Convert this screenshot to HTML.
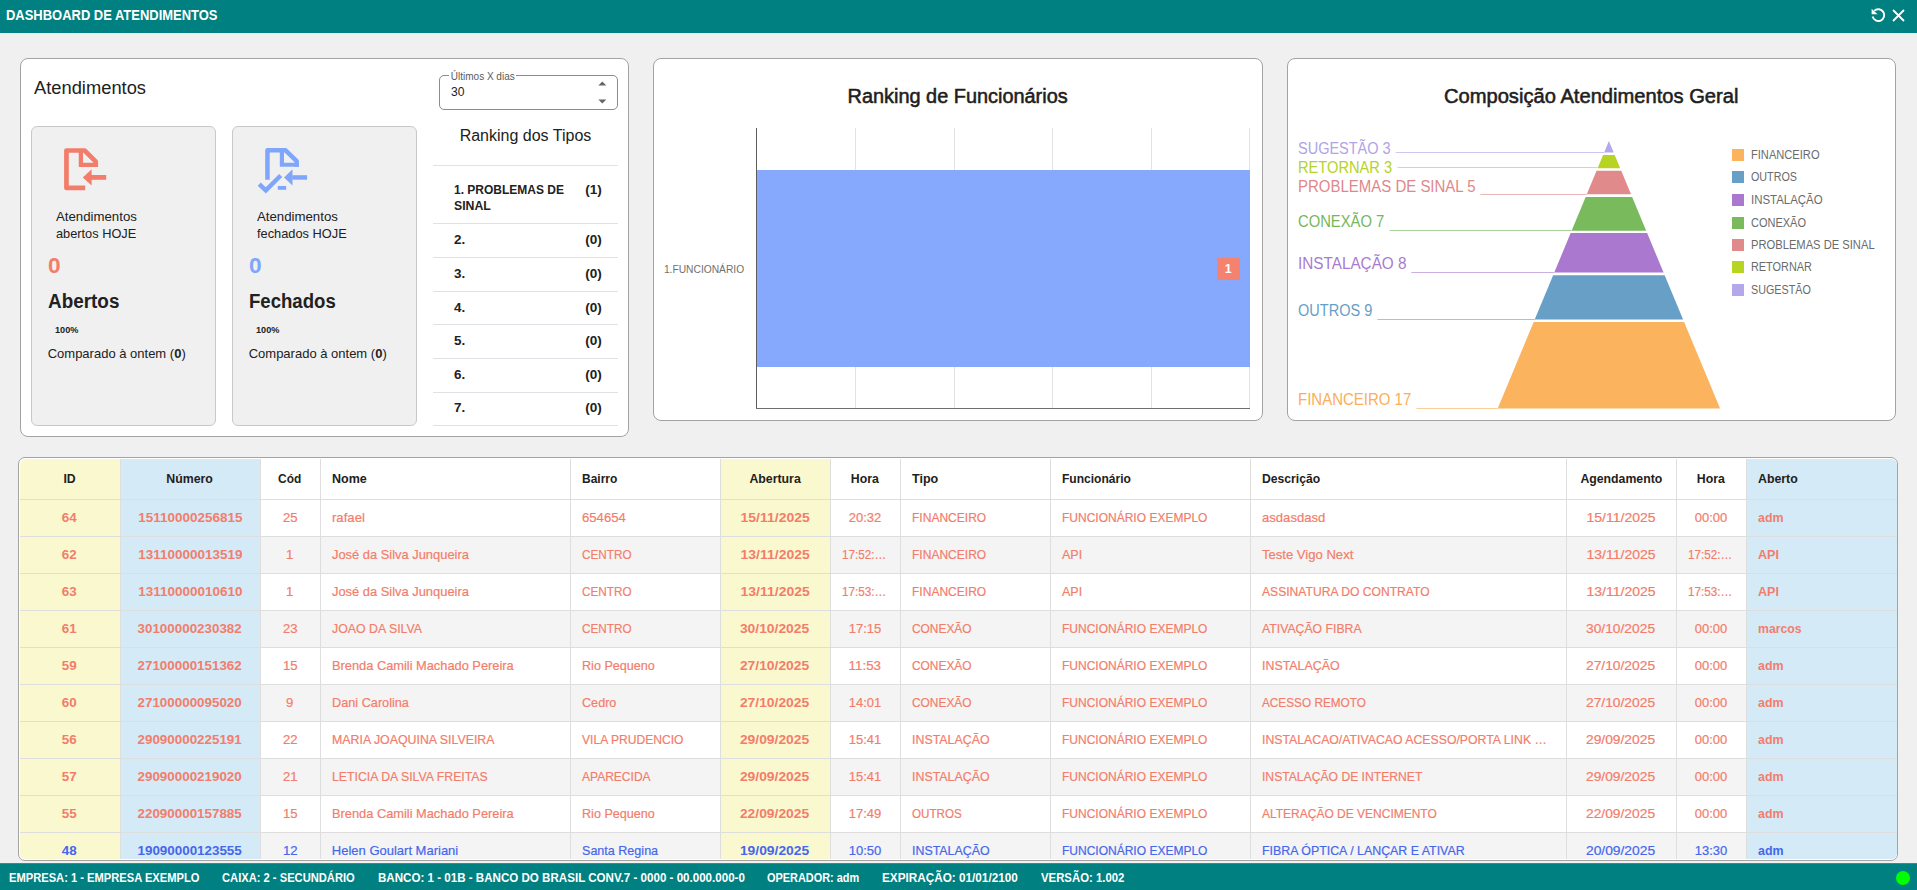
<!DOCTYPE html>
<html><head><meta charset="utf-8"><title>Dashboard de Atendimentos</title>
<style>
*{box-sizing:border-box;margin:0;padding:0}
html,body{width:1917px;height:890px;overflow:hidden;background:#f0f0f0;font-family:"Liberation Sans",sans-serif;color:#212121}
.t{position:absolute;white-space:nowrap}
.r{position:absolute}
</style></head><body>
<div class="r" style="left:0px;top:0px;width:1917px;height:33px;background:#008080"></div>
<div class="t" style="top:8.10px;font-size:14px;line-height:14px;font-weight:bold;color:#fff;transform:scaleX(0.9258);left:6.30px;transform-origin:0 0;">DASHBOARD DE ATENDIMENTOS</div>
<svg class="r" style="left:1860px;top:0px" width="57" height="33" viewBox="1860 0 57 33">
<path d="M1872.6 16.6 A5.9 5.9 0 1 0 1874.3 10.8" fill="none" stroke="#fff" stroke-width="1.9"/>
<path d="M1871.6 8.7 L1871.6 14.3 L1877.6 14.3 Z" fill="#fff"/>
<path d="M1893 10 L1904 21 M1904 10 L1893 21" stroke="#fff" stroke-width="1.8"/>
</svg>
<div class="r" style="left:20px;top:58px;width:609px;height:379px;background:#fff;border:1px solid #a3a3a3;border-radius:8px"></div>
<div class="r" style="left:653px;top:58px;width:610px;height:363px;background:#fff;border:1px solid #a3a3a3;border-radius:8px"></div>
<div class="r" style="left:1287px;top:58px;width:609px;height:363px;background:#fff;border:1px solid #a3a3a3;border-radius:8px"></div>
<div class="t" style="top:78.70px;font-size:18px;line-height:18px;font-weight:normal;color:#212121;transform:scaleX(1.0177);left:34.00px;transform-origin:0 0;">Atendimentos</div>
<div class="r" style="left:439px;top:75px;width:179px;height:35px;border:1px solid #8c8c8c;border-radius:5px"></div>
<div class="r" style="left:449px;top:70px;width:67px;height:8px;background:#fff"></div>
<div class="t" style="top:72.40px;font-size:10px;line-height:10px;font-weight:normal;color:#5a5a5a;left:450.80px;transform-origin:0 0;">Últimos X dias</div>
<div class="t" style="top:85.60px;font-size:12px;line-height:12px;font-weight:normal;color:#222;transform:scaleX(1.0117);left:450.80px;transform-origin:0 0;">30</div>
<svg class="r" style="left:595px;top:78px" width="16" height="28" viewBox="595 78 16 28">
<path d="M598.3 85.6 L602.3 81.6 L606.3 85.6 Z" fill="#666"/>
<path d="M598.3 99.5 L602.3 103.5 L606.3 99.5 Z" fill="#666"/>
</svg>
<div class="r" style="left:31px;top:126px;width:185px;height:300px;background:#f0f0f0;border:1px solid #c9c9c9;border-radius:6px"></div>
<div class="r" style="left:232px;top:126px;width:185px;height:300px;background:#f0f0f0;border:1px solid #c9c9c9;border-radius:6px"></div>
<svg class="r" style="left:55px;top:140px" width="60" height="56" viewBox="55 140 60 56">
<path d="M85.2 187.9 H66.45 V150.5 H84.6 L95.75 161.6 V167" fill="none" stroke="#f37d6b" stroke-width="4.7" stroke-linejoin="round"/>
<path d="M80.9 150.5 V164.95 H97.9" fill="none" stroke="#f37d6b" stroke-width="4.3"/>
<rect x="91" y="175" width="15.2" height="4.8" fill="#f37d6b"/>
<path d="M82.8 177.5 L91.6 169.3 L91.6 185.4 Z" fill="#f37d6b"/>
</svg>
<svg class="r" style="left:250px;top:140px" width="65" height="56" viewBox="250 140 65 56">
<path d="M267.45 179.7 V150.3 H285.6 L296.7 161.2 V166.8" fill="none" stroke="#80a6fc" stroke-width="4.5" stroke-linejoin="round"/>
<path d="M281.9 150.3 V164.75 H298.9" fill="none" stroke="#80a6fc" stroke-width="4.2"/>
<path d="M259.2 184.2 L265.8 190.3 L280.7 175.5" fill="none" stroke="#80a6fc" stroke-width="4.5"/>
<rect x="277.8" y="186" width="8.4" height="3.8" fill="#80a6fc"/>
<rect x="292.2" y="175.2" width="14.9" height="4.5" fill="#80a6fc"/>
<path d="M284 177.5 L292.5 169.2 L292.5 185.5 Z" fill="#80a6fc"/>
</svg>
<div class="t" style="top:209.65px;font-size:13px;line-height:13px;font-weight:normal;color:#212121;transform:scaleX(1.0173);left:56.20px;transform-origin:0 0;">Atendimentos</div>
<div class="t" style="top:226.65px;font-size:13px;line-height:13px;font-weight:normal;color:#212121;transform:scaleX(0.9826);left:56.20px;transform-origin:0 0;">abertos HOJE</div>
<div class="t" style="top:254.70px;font-size:22px;line-height:22px;font-weight:bold;color:#f37d6b;transform:scaleX(1.0319);left:47.70px;transform-origin:0 0;">0</div>
<div class="t" style="top:291.20px;font-size:20px;line-height:20px;font-weight:bold;color:#212121;transform:scaleX(0.9448);left:47.70px;transform-origin:0 0;">Abertos</div>
<div class="t" style="top:325.12px;font-size:9.5px;line-height:9.5px;font-weight:bold;color:#212121;transform:scaleX(0.9621);left:54.50px;transform-origin:0 0;">100%</div>
<div class="t" style="top:347.05px;font-size:13px;line-height:13px;font-weight:normal;color:#212121;left:47.70px;transform-origin:0 0;">Comparado à ontem (<b>0</b>)</div>
<div class="t" style="top:209.65px;font-size:13px;line-height:13px;font-weight:normal;color:#212121;transform:scaleX(1.0173);left:257.20px;transform-origin:0 0;">Atendimentos</div>
<div class="t" style="top:226.65px;font-size:13px;line-height:13px;font-weight:normal;color:#212121;transform:scaleX(0.9856);left:257.20px;transform-origin:0 0;">fechados HOJE</div>
<div class="t" style="top:254.70px;font-size:22px;line-height:22px;font-weight:bold;color:#80a6fc;transform:scaleX(1.0319);left:248.70px;transform-origin:0 0;">0</div>
<div class="t" style="top:291.20px;font-size:20px;line-height:20px;font-weight:bold;color:#212121;transform:scaleX(0.9290);left:248.70px;transform-origin:0 0;">Fechados</div>
<div class="t" style="top:325.12px;font-size:9.5px;line-height:9.5px;font-weight:bold;color:#212121;transform:scaleX(0.9621);left:255.50px;transform-origin:0 0;">100%</div>
<div class="t" style="top:347.05px;font-size:13px;line-height:13px;font-weight:normal;color:#212121;left:248.70px;transform-origin:0 0;">Comparado à ontem (<b>0</b>)</div>
<div class="t" style="top:127.60px;font-size:16px;line-height:16px;font-weight:normal;color:#212121;left:449.62px;width:151.75px;text-align:center;transform-origin:50% 0;">Ranking dos Tipos</div>
<div class="r" style="left:433px;top:165px;width:185px;height:1px;background:#dee2e6"></div>
<div class="r" style="left:433px;top:223px;width:185px;height:1px;background:#dee2e6"></div>
<div class="r" style="left:433px;top:257px;width:185px;height:1px;background:#dee2e6"></div>
<div class="r" style="left:433px;top:291px;width:185px;height:1px;background:#dee2e6"></div>
<div class="r" style="left:433px;top:324px;width:185px;height:1px;background:#dee2e6"></div>
<div class="r" style="left:433px;top:358px;width:185px;height:1px;background:#dee2e6"></div>
<div class="r" style="left:433px;top:392px;width:185px;height:1px;background:#dee2e6"></div>
<div class="r" style="left:433px;top:425px;width:185px;height:1px;background:#dee2e6"></div>
<div class="t" style="top:182.95px;font-size:13px;line-height:13px;font-weight:bold;color:#212121;transform:scaleX(0.9228);left:453.60px;transform-origin:0 0;">1. PROBLEMAS DE</div>
<div class="t" style="top:198.95px;font-size:13px;line-height:13px;font-weight:bold;color:#212121;transform:scaleX(0.9447);left:453.60px;transform-origin:0 0;">SINAL</div>
<div class="t" style="top:182.95px;font-size:13px;line-height:13px;font-weight:bold;color:#212121;transform:scaleX(1.0423);left:566.11px;width:35.89px;text-align:right;transform-origin:100% 0;">(1)</div>
<div class="t" style="top:232.95px;font-size:13px;line-height:13px;font-weight:bold;color:#212121;transform:scaleX(1.0346);left:453.60px;transform-origin:0 0;">2.</div>
<div class="t" style="top:232.95px;font-size:13px;line-height:13px;font-weight:bold;color:#212121;transform:scaleX(1.0423);left:566.31px;width:35.89px;text-align:right;transform-origin:100% 0;">(0)</div>
<div class="t" style="top:266.65px;font-size:13px;line-height:13px;font-weight:bold;color:#212121;transform:scaleX(1.0346);left:453.60px;transform-origin:0 0;">3.</div>
<div class="t" style="top:266.65px;font-size:13px;line-height:13px;font-weight:bold;color:#212121;transform:scaleX(1.0423);left:566.31px;width:35.89px;text-align:right;transform-origin:100% 0;">(0)</div>
<div class="t" style="top:300.85px;font-size:13px;line-height:13px;font-weight:bold;color:#212121;transform:scaleX(1.0346);left:453.60px;transform-origin:0 0;">4.</div>
<div class="t" style="top:300.85px;font-size:13px;line-height:13px;font-weight:bold;color:#212121;transform:scaleX(1.0423);left:566.31px;width:35.89px;text-align:right;transform-origin:100% 0;">(0)</div>
<div class="t" style="top:334.05px;font-size:13px;line-height:13px;font-weight:bold;color:#212121;transform:scaleX(1.0346);left:453.60px;transform-origin:0 0;">5.</div>
<div class="t" style="top:334.05px;font-size:13px;line-height:13px;font-weight:bold;color:#212121;transform:scaleX(1.0423);left:566.31px;width:35.89px;text-align:right;transform-origin:100% 0;">(0)</div>
<div class="t" style="top:367.75px;font-size:13px;line-height:13px;font-weight:bold;color:#212121;transform:scaleX(1.0346);left:453.60px;transform-origin:0 0;">6.</div>
<div class="t" style="top:367.75px;font-size:13px;line-height:13px;font-weight:bold;color:#212121;transform:scaleX(1.0423);left:566.31px;width:35.89px;text-align:right;transform-origin:100% 0;">(0)</div>
<div class="t" style="top:401.45px;font-size:13px;line-height:13px;font-weight:bold;color:#212121;transform:scaleX(1.0346);left:453.60px;transform-origin:0 0;">7.</div>
<div class="t" style="top:401.45px;font-size:13px;line-height:13px;font-weight:bold;color:#212121;transform:scaleX(1.0423);left:566.31px;width:35.89px;text-align:right;transform-origin:100% 0;">(0)</div>
<div class="t" style="top:86.40px;font-size:20px;line-height:20px;font-weight:normal;color:#1e1e1e;-webkit-text-stroke:0.55px #1e1e1e;transform:scaleX(0.9949);left:837.38px;width:241.25px;text-align:center;transform-origin:50% 0;">Ranking de Funcionários</div>
<div class="r" style="left:855px;top:128px;width:1px;height:280px;background:#e3e3e3"></div>
<div class="r" style="left:954px;top:128px;width:1px;height:280px;background:#e3e3e3"></div>
<div class="r" style="left:1052px;top:128px;width:1px;height:280px;background:#e3e3e3"></div>
<div class="r" style="left:1151px;top:128px;width:1px;height:280px;background:#e3e3e3"></div>
<div class="r" style="left:1249px;top:128px;width:1px;height:280px;background:#e3e3e3"></div>
<div class="r" style="left:757px;top:170px;width:493px;height:197px;background:#86a9fd"></div>
<div class="r" style="left:756px;top:128px;width:1px;height:281px;background:#5e5e5e"></div>
<div class="r" style="left:756px;top:408px;width:494px;height:1px;background:#6e6e6e"></div>
<div class="t" style="top:264.25px;font-size:11px;line-height:11px;font-weight:normal;color:#707070;transform:scaleX(0.9317);left:638.41px;width:106.19px;text-align:right;transform-origin:100% 0;">1.FUNCIONÁRIO</div>
<div class="r" style="left:1217px;top:258px;width:23px;height:22px;background:#f4826e"></div>
<div class="t" style="top:263.30px;font-size:12px;line-height:12px;font-weight:bold;color:#fff;transform:scaleX(1.0328);left:1215.16px;width:26.67px;text-align:center;transform-origin:50% 0;">1</div>
<div class="t" style="top:86.40px;font-size:20px;line-height:20px;font-weight:normal;color:#1e1e1e;-webkit-text-stroke:0.55px #1e1e1e;transform:scaleX(1.0074);left:1435.30px;width:312.39px;text-align:center;transform-origin:50% 0;">Composição Atendimentos Geral</div>
<div class="t" style="top:140.90px;font-size:16px;line-height:16px;font-weight:normal;color:#b0a3e6;transform:scaleX(0.9058);left:1297.90px;transform-origin:0 0;">SUGESTÃO 3</div>
<div class="t" style="top:160.00px;font-size:16px;line-height:16px;font-weight:normal;color:#b5d22a;transform:scaleX(0.9148);left:1297.90px;transform-origin:0 0;">RETORNAR 3</div>
<div class="t" style="top:178.80px;font-size:16px;line-height:16px;font-weight:normal;color:#df878a;transform:scaleX(0.9363);left:1297.90px;transform-origin:0 0;">PROBLEMAS DE SINAL 5</div>
<div class="t" style="top:213.80px;font-size:16px;line-height:16px;font-weight:normal;color:#76b65b;transform:scaleX(0.9242);left:1297.90px;transform-origin:0 0;">CONEXÃO 7</div>
<div class="t" style="top:256.10px;font-size:16px;line-height:16px;font-weight:normal;color:#a97bd0;transform:scaleX(0.9558);left:1297.90px;transform-origin:0 0;">INSTALAÇÃO 8</div>
<div class="t" style="top:303.20px;font-size:16px;line-height:16px;font-weight:normal;color:#679ec6;transform:scaleX(0.9076);left:1297.90px;transform-origin:0 0;">OUTROS 9</div>
<div class="t" style="top:392.20px;font-size:16px;line-height:16px;font-weight:normal;color:#faae5a;transform:scaleX(0.9367);left:1297.90px;transform-origin:0 0;">FINANCEIRO 17</div>
<svg class="r" style="left:1288px;top:59px" width="607" height="361" viewBox="1288 59 607 361"><path d="M1608.90 141.1 L1608.90 141.1 L1613.68 152.6 L1604.12 152.6 Z" fill="#b4a7ea"/><path d="M1603.12 155.0 L1614.68 155.0 L1620.21 168.3 L1597.59 168.3 Z" fill="#b7d423"/><path d="M1596.55 170.8 L1621.25 170.8 L1631.02 194.3 L1586.78 194.3 Z" fill="#e08a8c"/><path d="M1585.66 197.0 L1632.14 197.0 L1646.19 230.8 L1571.61 230.8 Z" fill="#79ba5c"/><path d="M1570.66 233.1 L1647.14 233.1 L1663.56 272.6 L1554.24 272.6 Z" fill="#aa79cf"/><path d="M1553.15 275.2 L1664.65 275.2 L1683.10 319.6 L1534.70 319.6 Z" fill="#679fc6"/><path d="M1533.66 322.1 L1684.14 322.1 L1720.10 408.6 L1497.70 408.6 Z" fill="#fbb35e"/><path d="M1395.7 152.5 H1604.1" stroke="#b0a3e6" stroke-width="1" opacity="0.6"/><path d="M1397.5 167.5 H1597.6" stroke="#b5d22a" stroke-width="1" opacity="0.6"/><path d="M1480.4 194.5 H1586.8" stroke="#df878a" stroke-width="1" opacity="0.6"/><path d="M1389.5 230.5 H1571.6" stroke="#76b65b" stroke-width="1" opacity="0.6"/><path d="M1411.3 272.5 H1554.2" stroke="#a97bd0" stroke-width="1" opacity="0.6"/><path d="M1377.4 319.5 H1534.7" stroke="#679ec6" stroke-width="1" opacity="0.6"/><path d="M1416.4 408.5 H1497.7" stroke="#faae5a" stroke-width="1" opacity="0.6"/></svg>
<div class="r" style="left:1732px;top:149px;width:12px;height:12px;background:#fbb35e"></div>
<div class="t" style="top:148.80px;font-size:12px;line-height:12px;font-weight:normal;color:#6b6b6b;transform:scaleX(0.9259);left:1751.40px;transform-origin:0 0;">FINANCEIRO</div>
<div class="r" style="left:1732px;top:171px;width:12px;height:12px;background:#679fc6"></div>
<div class="t" style="top:170.80px;font-size:12px;line-height:12px;font-weight:normal;color:#6b6b6b;transform:scaleX(0.8953);left:1751.40px;transform-origin:0 0;">OUTROS</div>
<div class="r" style="left:1732px;top:194px;width:12px;height:12px;background:#aa79cf"></div>
<div class="t" style="top:193.80px;font-size:12px;line-height:12px;font-weight:normal;color:#6b6b6b;transform:scaleX(0.9538);left:1751.40px;transform-origin:0 0;">INSTALAÇÃO</div>
<div class="r" style="left:1732px;top:217px;width:12px;height:12px;background:#79ba5c"></div>
<div class="t" style="top:216.80px;font-size:12px;line-height:12px;font-weight:normal;color:#6b6b6b;transform:scaleX(0.9167);left:1751.40px;transform-origin:0 0;">CONEXÃO</div>
<div class="r" style="left:1732px;top:239px;width:12px;height:12px;background:#e08a8c"></div>
<div class="t" style="top:238.80px;font-size:12px;line-height:12px;font-weight:normal;color:#6b6b6b;transform:scaleX(0.9315);left:1751.40px;transform-origin:0 0;">PROBLEMAS DE SINAL</div>
<div class="r" style="left:1732px;top:261px;width:12px;height:12px;background:#b7d423"></div>
<div class="t" style="top:260.80px;font-size:12px;line-height:12px;font-weight:normal;color:#6b6b6b;transform:scaleX(0.9069);left:1751.40px;transform-origin:0 0;">RETORNAR</div>
<div class="r" style="left:1732px;top:284px;width:12px;height:12px;background:#b4a7ea"></div>
<div class="t" style="top:283.80px;font-size:12px;line-height:12px;font-weight:normal;color:#6b6b6b;transform:scaleX(0.8962);left:1751.40px;transform-origin:0 0;">SUGESTÃO</div>
<div class="r" style="left:18px;top:457px;width:1880px;height:404px;background:#fff;border:1px solid #a3a3a3;border-radius:7px;overflow:hidden"></div>
<div class="r" style="left:20px;top:459px;width:1877px;height:400px;overflow:hidden;border-radius:6px"><div class="r" style="left:0;top:78px;width:1877px;height:36px;background:#f4f4f4"></div><div class="r" style="left:0;top:152px;width:1877px;height:36px;background:#f4f4f4"></div><div class="r" style="left:0;top:226px;width:1877px;height:36px;background:#f4f4f4"></div><div class="r" style="left:0;top:300px;width:1877px;height:36px;background:#f4f4f4"></div><div class="r" style="left:0;top:374px;width:1877px;height:36px;background:#f4f4f4"></div><div class="r" style="left:0px;top:0;width:100px;height:400px;background:#faf8cf"></div><div class="r" style="left:101px;top:0;width:139px;height:400px;background:#d4eaf7"></div><div class="r" style="left:701px;top:0;width:109px;height:400px;background:#faf8cf"></div><div class="r" style="left:1727px;top:0;width:150px;height:400px;background:#d4eaf7"></div><div class="r" style="left:0;top:40px;width:1877px;height:1px;background:#dedede"></div><div class="r" style="left:0;top:77px;width:1877px;height:1px;background:#dedede"></div><div class="r" style="left:0;top:114px;width:1877px;height:1px;background:#dedede"></div><div class="r" style="left:0;top:151px;width:1877px;height:1px;background:#dedede"></div><div class="r" style="left:0;top:188px;width:1877px;height:1px;background:#dedede"></div><div class="r" style="left:0;top:225px;width:1877px;height:1px;background:#dedede"></div><div class="r" style="left:0;top:262px;width:1877px;height:1px;background:#dedede"></div><div class="r" style="left:0;top:299px;width:1877px;height:1px;background:#dedede"></div><div class="r" style="left:0;top:336px;width:1877px;height:1px;background:#dedede"></div><div class="r" style="left:0;top:373px;width:1877px;height:1px;background:#dedede"></div><div class="r" style="left:100px;top:0;width:1px;height:400px;background:#dedede"></div><div class="r" style="left:240px;top:0;width:1px;height:400px;background:#dedede"></div><div class="r" style="left:300px;top:0;width:1px;height:400px;background:#dedede"></div><div class="r" style="left:550px;top:0;width:1px;height:400px;background:#dedede"></div><div class="r" style="left:700px;top:0;width:1px;height:400px;background:#dedede"></div><div class="r" style="left:810px;top:0;width:1px;height:400px;background:#dedede"></div><div class="r" style="left:880px;top:0;width:1px;height:400px;background:#dedede"></div><div class="r" style="left:1030px;top:0;width:1px;height:400px;background:#dedede"></div><div class="r" style="left:1230px;top:0;width:1px;height:400px;background:#dedede"></div><div class="r" style="left:1546px;top:0;width:1px;height:400px;background:#dedede"></div><div class="r" style="left:1656px;top:0;width:1px;height:400px;background:#dedede"></div><div class="r" style="left:1726px;top:0;width:1px;height:400px;background:#dedede"></div></div>
<div class="t" style="top:471.95px;font-size:13px;line-height:13px;font-weight:bold;color:#212121;transform:scaleX(0.9423);left:53.00px;width:33.00px;text-align:center;transform-origin:50% 0;">ID</div>
<div class="t" style="top:471.95px;font-size:13px;line-height:13px;font-weight:bold;color:#212121;transform:scaleX(0.9497);left:155.44px;width:69.12px;text-align:center;transform-origin:50% 0;">Número</div>
<div class="t" style="top:471.95px;font-size:13px;line-height:13px;font-weight:bold;color:#212121;transform:scaleX(0.9165);left:267.37px;width:45.27px;text-align:center;transform-origin:50% 0;">Cód</div>
<div class="t" style="top:471.95px;font-size:13px;line-height:13px;font-weight:bold;color:#212121;transform:scaleX(0.9632);left:331.80px;transform-origin:0 0;">Nome</div>
<div class="t" style="top:471.95px;font-size:13px;line-height:13px;font-weight:bold;color:#212121;transform:scaleX(0.9237);left:581.80px;transform-origin:0 0;">Bairro</div>
<div class="t" style="top:471.95px;font-size:13px;line-height:13px;font-weight:bold;color:#212121;transform:scaleX(0.9475);left:737.91px;width:74.19px;text-align:center;transform-origin:50% 0;">Abertura</div>
<div class="t" style="top:471.95px;font-size:13px;line-height:13px;font-weight:bold;color:#212121;transform:scaleX(0.9462);left:840.19px;width:49.62px;text-align:center;transform-origin:50% 0;">Hora</div>
<div class="t" style="top:471.95px;font-size:13px;line-height:13px;font-weight:bold;color:#212121;transform:scaleX(0.9621);left:911.80px;transform-origin:0 0;">Tipo</div>
<div class="t" style="top:471.95px;font-size:13px;line-height:13px;font-weight:bold;color:#212121;transform:scaleX(0.9263);left:1061.80px;transform-origin:0 0;">Funcionário</div>
<div class="t" style="top:471.95px;font-size:13px;line-height:13px;font-weight:bold;color:#212121;transform:scaleX(0.9357);left:1261.80px;transform-origin:0 0;">Descrição</div>
<div class="t" style="top:471.95px;font-size:13px;line-height:13px;font-weight:bold;color:#212121;transform:scaleX(0.9445);left:1567.66px;width:106.67px;text-align:center;transform-origin:50% 0;">Agendamento</div>
<div class="t" style="top:471.95px;font-size:13px;line-height:13px;font-weight:bold;color:#212121;transform:scaleX(0.9462);left:1686.19px;width:49.62px;text-align:center;transform-origin:50% 0;">Hora</div>
<div class="t" style="top:471.95px;font-size:13px;line-height:13px;font-weight:bold;color:#212121;transform:scaleX(0.9482);left:1757.80px;transform-origin:0 0;">Aberto</div>
<div class="t" style="top:510.95px;font-size:13px;line-height:13px;font-weight:bold;color:#f37d6b;transform:scaleX(1.0302);left:52.27px;width:34.47px;text-align:center;transform-origin:50% 0;">64</div>
<div class="t" style="top:510.95px;font-size:13px;line-height:13px;font-weight:bold;color:#f37d6b;transform:scaleX(1.0376);left:129.72px;width:120.56px;text-align:center;transform-origin:50% 0;">15110000256815</div>
<div class="t" style="top:510.95px;font-size:13px;line-height:13px;font-weight:normal;color:#f37d6b;transform:scaleX(1.0108);left:272.77px;width:34.47px;text-align:center;transform-origin:50% 0;-webkit-text-stroke:0.2px currentColor;">25</div>
<div class="t" style="top:510.95px;font-size:13px;line-height:13px;font-weight:normal;color:#f37d6b;transform:scaleX(1.0106);left:331.80px;transform-origin:0 0;-webkit-text-stroke:0.2px currentColor;">rafael</div>
<div class="t" style="top:510.95px;font-size:13px;line-height:13px;font-weight:normal;color:#f37d6b;transform:scaleX(1.0108);left:581.80px;transform-origin:0 0;-webkit-text-stroke:0.2px currentColor;">654654</div>
<div class="t" style="top:510.95px;font-size:13px;line-height:13px;font-weight:bold;color:#f37d6b;transform:scaleX(1.0762);left:732.81px;width:84.38px;text-align:center;transform-origin:50% 0;">15/11/2025</div>
<div class="t" style="top:510.95px;font-size:13px;line-height:13px;font-weight:normal;color:#f37d6b;left:838.73px;width:52.55px;text-align:center;transform-origin:50% 0;-webkit-text-stroke:0.2px currentColor;">20:32</div>
<div class="t" style="top:510.95px;font-size:13px;line-height:13px;font-weight:normal;color:#f37d6b;transform:scaleX(0.9257);left:911.80px;transform-origin:0 0;-webkit-text-stroke:0.2px currentColor;">FINANCEIRO</div>
<div class="t" style="top:510.95px;font-size:13px;line-height:13px;font-weight:normal;color:#f37d6b;transform:scaleX(0.9236);left:1061.80px;transform-origin:0 0;-webkit-text-stroke:0.2px currentColor;">FUNCIONÁRIO EXEMPLO</div>
<div class="t" style="top:510.95px;font-size:13px;line-height:13px;font-weight:normal;color:#f37d6b;transform:scaleX(1.0067);left:1261.80px;transform-origin:0 0;-webkit-text-stroke:0.2px currentColor;">asdasdasd</div>
<div class="t" style="top:510.95px;font-size:13px;line-height:13px;font-weight:normal;color:#f37d6b;transform:scaleX(1.0794);left:1578.94px;width:84.12px;text-align:center;transform-origin:50% 0;-webkit-text-stroke:0.2px currentColor;">15/11/2025</div>
<div class="t" style="top:510.95px;font-size:13px;line-height:13px;font-weight:normal;color:#f37d6b;left:1684.73px;width:52.55px;text-align:center;transform-origin:50% 0;-webkit-text-stroke:0.2px currentColor;">00:00</div>
<div class="t" style="top:510.95px;font-size:13px;line-height:13px;font-weight:bold;color:#f37d6b;transform:scaleX(0.9550);left:1757.80px;transform-origin:0 0;">adm</div>
<div class="t" style="top:547.95px;font-size:13px;line-height:13px;font-weight:bold;color:#f37d6b;transform:scaleX(1.0302);left:52.27px;width:34.47px;text-align:center;transform-origin:50% 0;">62</div>
<div class="t" style="top:547.95px;font-size:13px;line-height:13px;font-weight:bold;color:#f37d6b;transform:scaleX(1.0376);left:129.72px;width:120.56px;text-align:center;transform-origin:50% 0;">13110000013519</div>
<div class="t" style="top:547.95px;font-size:13px;line-height:13px;font-weight:normal;color:#f37d6b;transform:scaleX(1.0108);left:276.38px;width:27.23px;text-align:center;transform-origin:50% 0;-webkit-text-stroke:0.2px currentColor;">1</div>
<div class="t" style="top:547.95px;font-size:13px;line-height:13px;font-weight:normal;color:#f37d6b;transform:scaleX(0.9916);left:331.80px;transform-origin:0 0;-webkit-text-stroke:0.2px currentColor;">José da Silva Junqueira</div>
<div class="t" style="top:547.95px;font-size:13px;line-height:13px;font-weight:normal;color:#f37d6b;transform:scaleX(0.9046);left:581.80px;transform-origin:0 0;-webkit-text-stroke:0.2px currentColor;">CENTRO</div>
<div class="t" style="top:547.95px;font-size:13px;line-height:13px;font-weight:bold;color:#f37d6b;transform:scaleX(1.0762);left:732.81px;width:84.38px;text-align:center;transform-origin:50% 0;">13/11/2025</div>
<div class="t" style="top:547.95px;font-size:13px;line-height:13px;font-weight:normal;color:#f37d6b;transform:scaleX(0.9005);left:841.80px;transform-origin:0 0;-webkit-text-stroke:0.2px currentColor;">17:52:…</div>
<div class="t" style="top:547.95px;font-size:13px;line-height:13px;font-weight:normal;color:#f37d6b;transform:scaleX(0.9257);left:911.80px;transform-origin:0 0;-webkit-text-stroke:0.2px currentColor;">FINANCEIRO</div>
<div class="t" style="top:547.95px;font-size:13px;line-height:13px;font-weight:normal;color:#f37d6b;transform:scaleX(0.9650);left:1061.80px;transform-origin:0 0;-webkit-text-stroke:0.2px currentColor;">API</div>
<div class="t" style="top:547.95px;font-size:13px;line-height:13px;font-weight:normal;color:#f37d6b;transform:scaleX(1.0055);left:1261.80px;transform-origin:0 0;-webkit-text-stroke:0.2px currentColor;">Teste Vigo Next</div>
<div class="t" style="top:547.95px;font-size:13px;line-height:13px;font-weight:normal;color:#f37d6b;transform:scaleX(1.0794);left:1578.94px;width:84.12px;text-align:center;transform-origin:50% 0;-webkit-text-stroke:0.2px currentColor;">13/11/2025</div>
<div class="t" style="top:547.95px;font-size:13px;line-height:13px;font-weight:normal;color:#f37d6b;transform:scaleX(0.9005);left:1687.80px;transform-origin:0 0;-webkit-text-stroke:0.2px currentColor;">17:52:…</div>
<div class="t" style="top:547.95px;font-size:13px;line-height:13px;font-weight:bold;color:#f37d6b;transform:scaleX(0.9647);left:1757.80px;transform-origin:0 0;">API</div>
<div class="t" style="top:584.95px;font-size:13px;line-height:13px;font-weight:bold;color:#f37d6b;transform:scaleX(1.0302);left:52.27px;width:34.47px;text-align:center;transform-origin:50% 0;">63</div>
<div class="t" style="top:584.95px;font-size:13px;line-height:13px;font-weight:bold;color:#f37d6b;transform:scaleX(1.0376);left:129.72px;width:120.56px;text-align:center;transform-origin:50% 0;">13110000010610</div>
<div class="t" style="top:584.95px;font-size:13px;line-height:13px;font-weight:normal;color:#f37d6b;transform:scaleX(1.0108);left:276.38px;width:27.23px;text-align:center;transform-origin:50% 0;-webkit-text-stroke:0.2px currentColor;">1</div>
<div class="t" style="top:584.95px;font-size:13px;line-height:13px;font-weight:normal;color:#f37d6b;transform:scaleX(0.9916);left:331.80px;transform-origin:0 0;-webkit-text-stroke:0.2px currentColor;">José da Silva Junqueira</div>
<div class="t" style="top:584.95px;font-size:13px;line-height:13px;font-weight:normal;color:#f37d6b;transform:scaleX(0.9046);left:581.80px;transform-origin:0 0;-webkit-text-stroke:0.2px currentColor;">CENTRO</div>
<div class="t" style="top:584.95px;font-size:13px;line-height:13px;font-weight:bold;color:#f37d6b;transform:scaleX(1.0762);left:732.81px;width:84.38px;text-align:center;transform-origin:50% 0;">13/11/2025</div>
<div class="t" style="top:584.95px;font-size:13px;line-height:13px;font-weight:normal;color:#f37d6b;transform:scaleX(0.9005);left:841.80px;transform-origin:0 0;-webkit-text-stroke:0.2px currentColor;">17:53:…</div>
<div class="t" style="top:584.95px;font-size:13px;line-height:13px;font-weight:normal;color:#f37d6b;transform:scaleX(0.9257);left:911.80px;transform-origin:0 0;-webkit-text-stroke:0.2px currentColor;">FINANCEIRO</div>
<div class="t" style="top:584.95px;font-size:13px;line-height:13px;font-weight:normal;color:#f37d6b;transform:scaleX(0.9650);left:1061.80px;transform-origin:0 0;-webkit-text-stroke:0.2px currentColor;">API</div>
<div class="t" style="top:584.95px;font-size:13px;line-height:13px;font-weight:normal;color:#f37d6b;transform:scaleX(0.9317);left:1261.80px;transform-origin:0 0;-webkit-text-stroke:0.2px currentColor;">ASSINATURA DO CONTRATO</div>
<div class="t" style="top:584.95px;font-size:13px;line-height:13px;font-weight:normal;color:#f37d6b;transform:scaleX(1.0794);left:1578.94px;width:84.12px;text-align:center;transform-origin:50% 0;-webkit-text-stroke:0.2px currentColor;">13/11/2025</div>
<div class="t" style="top:584.95px;font-size:13px;line-height:13px;font-weight:normal;color:#f37d6b;transform:scaleX(0.9005);left:1687.80px;transform-origin:0 0;-webkit-text-stroke:0.2px currentColor;">17:53:…</div>
<div class="t" style="top:584.95px;font-size:13px;line-height:13px;font-weight:bold;color:#f37d6b;transform:scaleX(0.9647);left:1757.80px;transform-origin:0 0;">API</div>
<div class="t" style="top:621.95px;font-size:13px;line-height:13px;font-weight:bold;color:#f37d6b;transform:scaleX(1.0302);left:52.27px;width:34.47px;text-align:center;transform-origin:50% 0;">61</div>
<div class="t" style="top:621.95px;font-size:13px;line-height:13px;font-weight:bold;color:#f37d6b;transform:scaleX(1.0302);left:129.36px;width:121.28px;text-align:center;transform-origin:50% 0;">30100000230382</div>
<div class="t" style="top:621.95px;font-size:13px;line-height:13px;font-weight:normal;color:#f37d6b;transform:scaleX(1.0108);left:272.77px;width:34.47px;text-align:center;transform-origin:50% 0;-webkit-text-stroke:0.2px currentColor;">23</div>
<div class="t" style="top:621.95px;font-size:13px;line-height:13px;font-weight:normal;color:#f37d6b;transform:scaleX(0.9494);left:331.80px;transform-origin:0 0;-webkit-text-stroke:0.2px currentColor;">JOAO DA SILVA</div>
<div class="t" style="top:621.95px;font-size:13px;line-height:13px;font-weight:normal;color:#f37d6b;transform:scaleX(0.9046);left:581.80px;transform-origin:0 0;-webkit-text-stroke:0.2px currentColor;">CENTRO</div>
<div class="t" style="top:621.95px;font-size:13px;line-height:13px;font-weight:bold;color:#f37d6b;transform:scaleX(1.0643);left:732.45px;width:85.09px;text-align:center;transform-origin:50% 0;">30/10/2025</div>
<div class="t" style="top:621.95px;font-size:13px;line-height:13px;font-weight:normal;color:#f37d6b;left:838.73px;width:52.55px;text-align:center;transform-origin:50% 0;-webkit-text-stroke:0.2px currentColor;">17:15</div>
<div class="t" style="top:621.95px;font-size:13px;line-height:13px;font-weight:normal;color:#f37d6b;transform:scaleX(0.9166);left:911.80px;transform-origin:0 0;-webkit-text-stroke:0.2px currentColor;">CONEXÃO</div>
<div class="t" style="top:621.95px;font-size:13px;line-height:13px;font-weight:normal;color:#f37d6b;transform:scaleX(0.9236);left:1061.80px;transform-origin:0 0;-webkit-text-stroke:0.2px currentColor;">FUNCIONÁRIO EXEMPLO</div>
<div class="t" style="top:621.95px;font-size:13px;line-height:13px;font-weight:normal;color:#f37d6b;transform:scaleX(0.9419);left:1261.80px;transform-origin:0 0;-webkit-text-stroke:0.2px currentColor;">ATIVAÇÃO FIBRA</div>
<div class="t" style="top:621.95px;font-size:13px;line-height:13px;font-weight:normal;color:#f37d6b;transform:scaleX(1.0634);left:1578.45px;width:85.09px;text-align:center;transform-origin:50% 0;-webkit-text-stroke:0.2px currentColor;">30/10/2025</div>
<div class="t" style="top:621.95px;font-size:13px;line-height:13px;font-weight:normal;color:#f37d6b;left:1684.73px;width:52.55px;text-align:center;transform-origin:50% 0;-webkit-text-stroke:0.2px currentColor;">00:00</div>
<div class="t" style="top:621.95px;font-size:13px;line-height:13px;font-weight:bold;color:#f37d6b;transform:scaleX(0.9433);left:1757.80px;transform-origin:0 0;">marcos</div>
<div class="t" style="top:658.95px;font-size:13px;line-height:13px;font-weight:bold;color:#f37d6b;transform:scaleX(1.0302);left:52.27px;width:34.47px;text-align:center;transform-origin:50% 0;">59</div>
<div class="t" style="top:658.95px;font-size:13px;line-height:13px;font-weight:bold;color:#f37d6b;transform:scaleX(1.0302);left:129.36px;width:121.28px;text-align:center;transform-origin:50% 0;">27100000151362</div>
<div class="t" style="top:658.95px;font-size:13px;line-height:13px;font-weight:normal;color:#f37d6b;transform:scaleX(1.0108);left:272.77px;width:34.47px;text-align:center;transform-origin:50% 0;-webkit-text-stroke:0.2px currentColor;">15</div>
<div class="t" style="top:658.95px;font-size:13px;line-height:13px;font-weight:normal;color:#f37d6b;transform:scaleX(0.9859);left:331.80px;transform-origin:0 0;-webkit-text-stroke:0.2px currentColor;">Brenda Camili Machado Pereira</div>
<div class="t" style="top:658.95px;font-size:13px;line-height:13px;font-weight:normal;color:#f37d6b;transform:scaleX(0.9690);left:581.80px;transform-origin:0 0;-webkit-text-stroke:0.2px currentColor;">Rio Pequeno</div>
<div class="t" style="top:658.95px;font-size:13px;line-height:13px;font-weight:bold;color:#f37d6b;transform:scaleX(1.0643);left:732.45px;width:85.09px;text-align:center;transform-origin:50% 0;">27/10/2025</div>
<div class="t" style="top:658.95px;font-size:13px;line-height:13px;font-weight:normal;color:#f37d6b;transform:scaleX(1.0262);left:839.21px;width:51.58px;text-align:center;transform-origin:50% 0;-webkit-text-stroke:0.2px currentColor;">11:53</div>
<div class="t" style="top:658.95px;font-size:13px;line-height:13px;font-weight:normal;color:#f37d6b;transform:scaleX(0.9166);left:911.80px;transform-origin:0 0;-webkit-text-stroke:0.2px currentColor;">CONEXÃO</div>
<div class="t" style="top:658.95px;font-size:13px;line-height:13px;font-weight:normal;color:#f37d6b;transform:scaleX(0.9236);left:1061.80px;transform-origin:0 0;-webkit-text-stroke:0.2px currentColor;">FUNCIONÁRIO EXEMPLO</div>
<div class="t" style="top:658.95px;font-size:13px;line-height:13px;font-weight:normal;color:#f37d6b;transform:scaleX(0.9539);left:1261.80px;transform-origin:0 0;-webkit-text-stroke:0.2px currentColor;">INSTALAÇÃO</div>
<div class="t" style="top:658.95px;font-size:13px;line-height:13px;font-weight:normal;color:#f37d6b;transform:scaleX(1.0634);left:1578.45px;width:85.09px;text-align:center;transform-origin:50% 0;-webkit-text-stroke:0.2px currentColor;">27/10/2025</div>
<div class="t" style="top:658.95px;font-size:13px;line-height:13px;font-weight:normal;color:#f37d6b;left:1684.73px;width:52.55px;text-align:center;transform-origin:50% 0;-webkit-text-stroke:0.2px currentColor;">00:00</div>
<div class="t" style="top:658.95px;font-size:13px;line-height:13px;font-weight:bold;color:#f37d6b;transform:scaleX(0.9550);left:1757.80px;transform-origin:0 0;">adm</div>
<div class="t" style="top:695.95px;font-size:13px;line-height:13px;font-weight:bold;color:#f37d6b;transform:scaleX(1.0302);left:52.27px;width:34.47px;text-align:center;transform-origin:50% 0;">60</div>
<div class="t" style="top:695.95px;font-size:13px;line-height:13px;font-weight:bold;color:#f37d6b;transform:scaleX(1.0302);left:129.36px;width:121.28px;text-align:center;transform-origin:50% 0;">27100000095020</div>
<div class="t" style="top:695.95px;font-size:13px;line-height:13px;font-weight:normal;color:#f37d6b;transform:scaleX(1.0108);left:276.38px;width:27.23px;text-align:center;transform-origin:50% 0;-webkit-text-stroke:0.2px currentColor;">9</div>
<div class="t" style="top:695.95px;font-size:13px;line-height:13px;font-weight:normal;color:#f37d6b;transform:scaleX(0.9768);left:331.80px;transform-origin:0 0;-webkit-text-stroke:0.2px currentColor;">Dani Carolina</div>
<div class="t" style="top:695.95px;font-size:13px;line-height:13px;font-weight:normal;color:#f37d6b;transform:scaleX(0.9709);left:581.80px;transform-origin:0 0;-webkit-text-stroke:0.2px currentColor;">Cedro</div>
<div class="t" style="top:695.95px;font-size:13px;line-height:13px;font-weight:bold;color:#f37d6b;transform:scaleX(1.0643);left:732.45px;width:85.09px;text-align:center;transform-origin:50% 0;">27/10/2025</div>
<div class="t" style="top:695.95px;font-size:13px;line-height:13px;font-weight:normal;color:#f37d6b;left:838.73px;width:52.55px;text-align:center;transform-origin:50% 0;-webkit-text-stroke:0.2px currentColor;">14:01</div>
<div class="t" style="top:695.95px;font-size:13px;line-height:13px;font-weight:normal;color:#f37d6b;transform:scaleX(0.9166);left:911.80px;transform-origin:0 0;-webkit-text-stroke:0.2px currentColor;">CONEXÃO</div>
<div class="t" style="top:695.95px;font-size:13px;line-height:13px;font-weight:normal;color:#f37d6b;transform:scaleX(0.9236);left:1061.80px;transform-origin:0 0;-webkit-text-stroke:0.2px currentColor;">FUNCIONÁRIO EXEMPLO</div>
<div class="t" style="top:695.95px;font-size:13px;line-height:13px;font-weight:normal;color:#f37d6b;transform:scaleX(0.9066);left:1261.80px;transform-origin:0 0;-webkit-text-stroke:0.2px currentColor;">ACESSO REMOTO</div>
<div class="t" style="top:695.95px;font-size:13px;line-height:13px;font-weight:normal;color:#f37d6b;transform:scaleX(1.0634);left:1578.45px;width:85.09px;text-align:center;transform-origin:50% 0;-webkit-text-stroke:0.2px currentColor;">27/10/2025</div>
<div class="t" style="top:695.95px;font-size:13px;line-height:13px;font-weight:normal;color:#f37d6b;left:1684.73px;width:52.55px;text-align:center;transform-origin:50% 0;-webkit-text-stroke:0.2px currentColor;">00:00</div>
<div class="t" style="top:695.95px;font-size:13px;line-height:13px;font-weight:bold;color:#f37d6b;transform:scaleX(0.9550);left:1757.80px;transform-origin:0 0;">adm</div>
<div class="t" style="top:732.95px;font-size:13px;line-height:13px;font-weight:bold;color:#f37d6b;transform:scaleX(1.0302);left:52.27px;width:34.47px;text-align:center;transform-origin:50% 0;">56</div>
<div class="t" style="top:732.95px;font-size:13px;line-height:13px;font-weight:bold;color:#f37d6b;transform:scaleX(1.0302);left:129.36px;width:121.28px;text-align:center;transform-origin:50% 0;">29090000225191</div>
<div class="t" style="top:732.95px;font-size:13px;line-height:13px;font-weight:normal;color:#f37d6b;transform:scaleX(1.0108);left:272.77px;width:34.47px;text-align:center;transform-origin:50% 0;-webkit-text-stroke:0.2px currentColor;">22</div>
<div class="t" style="top:732.95px;font-size:13px;line-height:13px;font-weight:normal;color:#f37d6b;transform:scaleX(0.9506);left:331.80px;transform-origin:0 0;-webkit-text-stroke:0.2px currentColor;">MARIA JOAQUINA SILVEIRA</div>
<div class="t" style="top:732.95px;font-size:13px;line-height:13px;font-weight:normal;color:#f37d6b;transform:scaleX(0.9298);left:581.80px;transform-origin:0 0;-webkit-text-stroke:0.2px currentColor;">VILA PRUDENCIO</div>
<div class="t" style="top:732.95px;font-size:13px;line-height:13px;font-weight:bold;color:#f37d6b;transform:scaleX(1.0643);left:732.45px;width:85.09px;text-align:center;transform-origin:50% 0;">29/09/2025</div>
<div class="t" style="top:732.95px;font-size:13px;line-height:13px;font-weight:normal;color:#f37d6b;left:838.73px;width:52.55px;text-align:center;transform-origin:50% 0;-webkit-text-stroke:0.2px currentColor;">15:41</div>
<div class="t" style="top:732.95px;font-size:13px;line-height:13px;font-weight:normal;color:#f37d6b;transform:scaleX(0.9539);left:911.80px;transform-origin:0 0;-webkit-text-stroke:0.2px currentColor;">INSTALAÇÃO</div>
<div class="t" style="top:732.95px;font-size:13px;line-height:13px;font-weight:normal;color:#f37d6b;transform:scaleX(0.9236);left:1061.80px;transform-origin:0 0;-webkit-text-stroke:0.2px currentColor;">FUNCIONÁRIO EXEMPLO</div>
<div class="t" style="top:732.95px;font-size:13px;line-height:13px;font-weight:normal;color:#f37d6b;transform:scaleX(0.9445);left:1261.80px;transform-origin:0 0;-webkit-text-stroke:0.2px currentColor;">INSTALACAO/ATIVACAO ACESSO/PORTA LINK …</div>
<div class="t" style="top:732.95px;font-size:13px;line-height:13px;font-weight:normal;color:#f37d6b;transform:scaleX(1.0634);left:1578.45px;width:85.09px;text-align:center;transform-origin:50% 0;-webkit-text-stroke:0.2px currentColor;">29/09/2025</div>
<div class="t" style="top:732.95px;font-size:13px;line-height:13px;font-weight:normal;color:#f37d6b;left:1684.73px;width:52.55px;text-align:center;transform-origin:50% 0;-webkit-text-stroke:0.2px currentColor;">00:00</div>
<div class="t" style="top:732.95px;font-size:13px;line-height:13px;font-weight:bold;color:#f37d6b;transform:scaleX(0.9550);left:1757.80px;transform-origin:0 0;">adm</div>
<div class="t" style="top:769.95px;font-size:13px;line-height:13px;font-weight:bold;color:#f37d6b;transform:scaleX(1.0302);left:52.27px;width:34.47px;text-align:center;transform-origin:50% 0;">57</div>
<div class="t" style="top:769.95px;font-size:13px;line-height:13px;font-weight:bold;color:#f37d6b;transform:scaleX(1.0302);left:129.36px;width:121.28px;text-align:center;transform-origin:50% 0;">29090000219020</div>
<div class="t" style="top:769.95px;font-size:13px;line-height:13px;font-weight:normal;color:#f37d6b;transform:scaleX(1.0108);left:272.77px;width:34.47px;text-align:center;transform-origin:50% 0;-webkit-text-stroke:0.2px currentColor;">21</div>
<div class="t" style="top:769.95px;font-size:13px;line-height:13px;font-weight:normal;color:#f37d6b;transform:scaleX(0.9456);left:331.80px;transform-origin:0 0;-webkit-text-stroke:0.2px currentColor;">LETICIA DA SILVA FREITAS</div>
<div class="t" style="top:769.95px;font-size:13px;line-height:13px;font-weight:normal;color:#f37d6b;transform:scaleX(0.9246);left:581.80px;transform-origin:0 0;-webkit-text-stroke:0.2px currentColor;">APARECIDA</div>
<div class="t" style="top:769.95px;font-size:13px;line-height:13px;font-weight:bold;color:#f37d6b;transform:scaleX(1.0643);left:732.45px;width:85.09px;text-align:center;transform-origin:50% 0;">29/09/2025</div>
<div class="t" style="top:769.95px;font-size:13px;line-height:13px;font-weight:normal;color:#f37d6b;left:838.73px;width:52.55px;text-align:center;transform-origin:50% 0;-webkit-text-stroke:0.2px currentColor;">15:41</div>
<div class="t" style="top:769.95px;font-size:13px;line-height:13px;font-weight:normal;color:#f37d6b;transform:scaleX(0.9539);left:911.80px;transform-origin:0 0;-webkit-text-stroke:0.2px currentColor;">INSTALAÇÃO</div>
<div class="t" style="top:769.95px;font-size:13px;line-height:13px;font-weight:normal;color:#f37d6b;transform:scaleX(0.9236);left:1061.80px;transform-origin:0 0;-webkit-text-stroke:0.2px currentColor;">FUNCIONÁRIO EXEMPLO</div>
<div class="t" style="top:769.95px;font-size:13px;line-height:13px;font-weight:normal;color:#f37d6b;transform:scaleX(0.9339);left:1261.80px;transform-origin:0 0;-webkit-text-stroke:0.2px currentColor;">INSTALAÇÃO DE INTERNET</div>
<div class="t" style="top:769.95px;font-size:13px;line-height:13px;font-weight:normal;color:#f37d6b;transform:scaleX(1.0634);left:1578.45px;width:85.09px;text-align:center;transform-origin:50% 0;-webkit-text-stroke:0.2px currentColor;">29/09/2025</div>
<div class="t" style="top:769.95px;font-size:13px;line-height:13px;font-weight:normal;color:#f37d6b;left:1684.73px;width:52.55px;text-align:center;transform-origin:50% 0;-webkit-text-stroke:0.2px currentColor;">00:00</div>
<div class="t" style="top:769.95px;font-size:13px;line-height:13px;font-weight:bold;color:#f37d6b;transform:scaleX(0.9550);left:1757.80px;transform-origin:0 0;">adm</div>
<div class="t" style="top:806.95px;font-size:13px;line-height:13px;font-weight:bold;color:#f37d6b;transform:scaleX(1.0302);left:52.27px;width:34.47px;text-align:center;transform-origin:50% 0;">55</div>
<div class="t" style="top:806.95px;font-size:13px;line-height:13px;font-weight:bold;color:#f37d6b;transform:scaleX(1.0302);left:129.36px;width:121.28px;text-align:center;transform-origin:50% 0;">22090000157885</div>
<div class="t" style="top:806.95px;font-size:13px;line-height:13px;font-weight:normal;color:#f37d6b;transform:scaleX(1.0108);left:272.77px;width:34.47px;text-align:center;transform-origin:50% 0;-webkit-text-stroke:0.2px currentColor;">15</div>
<div class="t" style="top:806.95px;font-size:13px;line-height:13px;font-weight:normal;color:#f37d6b;transform:scaleX(0.9859);left:331.80px;transform-origin:0 0;-webkit-text-stroke:0.2px currentColor;">Brenda Camili Machado Pereira</div>
<div class="t" style="top:806.95px;font-size:13px;line-height:13px;font-weight:normal;color:#f37d6b;transform:scaleX(0.9690);left:581.80px;transform-origin:0 0;-webkit-text-stroke:0.2px currentColor;">Rio Pequeno</div>
<div class="t" style="top:806.95px;font-size:13px;line-height:13px;font-weight:bold;color:#f37d6b;transform:scaleX(1.0643);left:732.45px;width:85.09px;text-align:center;transform-origin:50% 0;">22/09/2025</div>
<div class="t" style="top:806.95px;font-size:13px;line-height:13px;font-weight:normal;color:#f37d6b;left:838.73px;width:52.55px;text-align:center;transform-origin:50% 0;-webkit-text-stroke:0.2px currentColor;">17:49</div>
<div class="t" style="top:806.95px;font-size:13px;line-height:13px;font-weight:normal;color:#f37d6b;transform:scaleX(0.8955);left:911.80px;transform-origin:0 0;-webkit-text-stroke:0.2px currentColor;">OUTROS</div>
<div class="t" style="top:806.95px;font-size:13px;line-height:13px;font-weight:normal;color:#f37d6b;transform:scaleX(0.9236);left:1061.80px;transform-origin:0 0;-webkit-text-stroke:0.2px currentColor;">FUNCIONÁRIO EXEMPLO</div>
<div class="t" style="top:806.95px;font-size:13px;line-height:13px;font-weight:normal;color:#f37d6b;transform:scaleX(0.9224);left:1261.80px;transform-origin:0 0;-webkit-text-stroke:0.2px currentColor;">ALTERAÇÃO DE VENCIMENTO</div>
<div class="t" style="top:806.95px;font-size:13px;line-height:13px;font-weight:normal;color:#f37d6b;transform:scaleX(1.0634);left:1578.45px;width:85.09px;text-align:center;transform-origin:50% 0;-webkit-text-stroke:0.2px currentColor;">22/09/2025</div>
<div class="t" style="top:806.95px;font-size:13px;line-height:13px;font-weight:normal;color:#f37d6b;left:1684.73px;width:52.55px;text-align:center;transform-origin:50% 0;-webkit-text-stroke:0.2px currentColor;">00:00</div>
<div class="t" style="top:806.95px;font-size:13px;line-height:13px;font-weight:bold;color:#f37d6b;transform:scaleX(0.9550);left:1757.80px;transform-origin:0 0;">adm</div>
<div class="t" style="top:843.95px;font-size:13px;line-height:13px;font-weight:bold;color:#4467ec;transform:scaleX(1.0302);left:52.27px;width:34.47px;text-align:center;transform-origin:50% 0;">48</div>
<div class="t" style="top:843.95px;font-size:13px;line-height:13px;font-weight:bold;color:#4467ec;transform:scaleX(1.0302);left:129.36px;width:121.28px;text-align:center;transform-origin:50% 0;">19090000123555</div>
<div class="t" style="top:843.95px;font-size:13px;line-height:13px;font-weight:normal;color:#4467ec;transform:scaleX(1.0108);left:272.77px;width:34.47px;text-align:center;transform-origin:50% 0;-webkit-text-stroke:0.2px currentColor;">12</div>
<div class="t" style="top:843.95px;font-size:13px;line-height:13px;font-weight:normal;color:#4467ec;left:331.80px;transform-origin:0 0;-webkit-text-stroke:0.2px currentColor;">Helen Goulart Mariani</div>
<div class="t" style="top:843.95px;font-size:13px;line-height:13px;font-weight:normal;color:#4467ec;transform:scaleX(0.9659);left:581.80px;transform-origin:0 0;-webkit-text-stroke:0.2px currentColor;">Santa Regina</div>
<div class="t" style="top:843.95px;font-size:13px;line-height:13px;font-weight:bold;color:#4467ec;transform:scaleX(1.0643);left:732.45px;width:85.09px;text-align:center;transform-origin:50% 0;">19/09/2025</div>
<div class="t" style="top:843.95px;font-size:13px;line-height:13px;font-weight:normal;color:#4467ec;left:838.73px;width:52.55px;text-align:center;transform-origin:50% 0;-webkit-text-stroke:0.2px currentColor;">10:50</div>
<div class="t" style="top:843.95px;font-size:13px;line-height:13px;font-weight:normal;color:#4467ec;transform:scaleX(0.9539);left:911.80px;transform-origin:0 0;-webkit-text-stroke:0.2px currentColor;">INSTALAÇÃO</div>
<div class="t" style="top:843.95px;font-size:13px;line-height:13px;font-weight:normal;color:#4467ec;transform:scaleX(0.9236);left:1061.80px;transform-origin:0 0;-webkit-text-stroke:0.2px currentColor;">FUNCIONÁRIO EXEMPLO</div>
<div class="t" style="top:843.95px;font-size:13px;line-height:13px;font-weight:normal;color:#4467ec;transform:scaleX(0.9532);left:1261.80px;transform-origin:0 0;-webkit-text-stroke:0.2px currentColor;">FIBRA ÓPTICA / LANÇAR E ATIVAR</div>
<div class="t" style="top:843.95px;font-size:13px;line-height:13px;font-weight:normal;color:#4467ec;transform:scaleX(1.0634);left:1578.45px;width:85.09px;text-align:center;transform-origin:50% 0;-webkit-text-stroke:0.2px currentColor;">20/09/2025</div>
<div class="t" style="top:843.95px;font-size:13px;line-height:13px;font-weight:normal;color:#4467ec;left:1684.73px;width:52.55px;text-align:center;transform-origin:50% 0;-webkit-text-stroke:0.2px currentColor;">13:30</div>
<div class="t" style="top:843.95px;font-size:13px;line-height:13px;font-weight:bold;color:#4467ec;transform:scaleX(0.9550);left:1757.80px;transform-origin:0 0;">adm</div>
<div class="r" style="left:0px;top:863px;width:1917px;height:27px;background:#008080;border-top:1px solid #6f7574"></div>
<div class="t" style="top:872.00px;font-size:12px;line-height:12px;font-weight:bold;color:#fff;transform:scaleX(0.9295);left:9.00px;transform-origin:0 0;">EMPRESA: 1 - EMPRESA EXEMPLO</div>
<div class="t" style="top:872.00px;font-size:12px;line-height:12px;font-weight:bold;color:#fff;transform:scaleX(0.9305);left:222.15px;transform-origin:0 0;">CAIXA: 2 - SECUNDÁRIO</div>
<div class="t" style="top:872.00px;font-size:12px;line-height:12px;font-weight:bold;color:#fff;transform:scaleX(0.9652);left:377.62px;transform-origin:0 0;">BANCO: 1 - 01B - BANCO DO BRASIL CONV.7 - 0000 - 00.000.000-0</div>
<div class="t" style="top:872.00px;font-size:12px;line-height:12px;font-weight:bold;color:#fff;transform:scaleX(0.9098);left:767.16px;transform-origin:0 0;">OPERADOR: adm</div>
<div class="t" style="top:872.00px;font-size:12px;line-height:12px;font-weight:bold;color:#fff;transform:scaleX(0.9787);left:882.07px;transform-origin:0 0;">EXPIRAÇÃO: 01/01/2100</div>
<div class="t" style="top:872.00px;font-size:12px;line-height:12px;font-weight:bold;color:#fff;transform:scaleX(0.9466);left:1040.52px;transform-origin:0 0;">VERSÃO: 1.002</div>
<div class="r" style="left:1896px;top:871px;width:14px;height:14px;background:#00ff00;border-radius:50%"></div>
</body></html>
